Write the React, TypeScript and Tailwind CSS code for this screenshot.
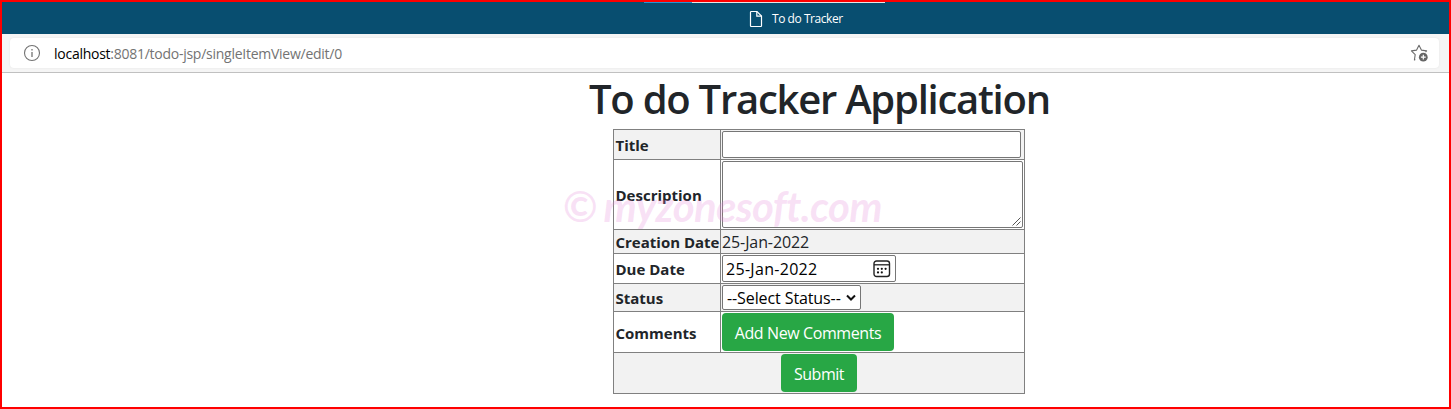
import React from 'react';

function Row({ label, shaded, height, children }: { label: string; shaded?: boolean; height: string; children: React.ReactNode }) {
  return (
    <div className={`flex border-b border-[#808080] ${height} ${shaded ? 'bg-[#f2f2f2]' : ''}`}>
      <div className="flex w-[107px] shrink-0 items-center border-r border-[#808080] pl-[1.5px] pt-[2px] text-[15px] font-bold whitespace-nowrap">
        {label}
      </div>
      <div className="flex flex-1 items-start p-px">{children}</div>
    </div>
  );
}

function PageIcon() {
  return (
    <svg width="14" height="18" viewBox="0 0 14 18" fill="none" stroke="#fff" strokeWidth="1.2">
      <path d="M1.5 2.2Q1.5 1.5 2.2 1.5H8L12.5 6V15.8Q12.5 16.5 11.8 16.5H2.2Q1.5 16.5 1.5 15.8Z" />
      <path d="M7.8 1.5V6.2H12.5" />
    </svg>
  );
}

function InfoIcon() {
  return (
    <svg width="18" height="18" viewBox="0 0 18 18" fill="none" stroke="#737373">
      <circle cx="9" cy="9" r="7.5" strokeWidth="1.1" />
      <path d="M9 8V13M9 5V6.4" strokeWidth="1.3" />
    </svg>
  );
}

function StarIcon() {
  return (
    <svg width="18" height="18" viewBox="0 0 18 18">
      <path d="M5.3 15.5L4.4 16L5.2 10.6L1.4 6.9L6.6 6.1L9 1.3L11.4 6.1L16.6 6.9L15.5 8" fill="none" stroke="#6b6b6b" strokeWidth="1.1" strokeLinejoin="round" />
      <circle cx="13.3" cy="13.2" r="4.4" fill="#666" />
      <path d="M13.3 10.8V15.6M10.9 13.2H15.7" stroke="#fff" strokeWidth="1.2" />
    </svg>
  );
}

function CalendarIcon() {
  return (
    <svg width="18" height="18" viewBox="0 0 18 18">
      <rect x="1" y="1" width="15.5" height="15.5" rx="2.5" fill="none" stroke="#222" strokeWidth="1.4" />
      <path d="M1 4.8H16.5" stroke="#222" strokeWidth="1.3" />
      <g fill="#111">
        <circle cx="5" cy="8.8" r="1.1" /><circle cx="8.8" cy="8.8" r="1.1" /><circle cx="12.6" cy="8.8" r="1.1" />
        <circle cx="5" cy="12.4" r="1.1" /><circle cx="8.8" cy="12.4" r="1.1" />
      </g>
    </svg>
  );
}

export default function App() {
  return (
    <div className="relative flex h-[409px] w-[1451px] flex-col overflow-hidden border-2 border-[#ff0000] bg-white font-['Open_Sans','Noto_Sans',sans-serif] text-[#212529]">
      <div className="flex h-8 shrink-0 flex-col bg-[#084e70]">
        <div className="ml-[642px] flex h-px">
          <div className="w-12 bg-[#2b94d1]" />
          <div className="w-[193px] bg-[#e6e6e6]" />
        </div>
        <div className="flex h-[31px] items-center pl-[747px] text-white">
          <PageIcon />
          <span className="ml-[9px] text-[12px] tracking-[-0.45px]">To do Tracker</span>
        </div>
      </div>
      <div className="h-[39px] shrink-0 border-b border-[#c0c0c0] bg-[#f5f5f5] pt-1 pr-2.5 pl-2">
        <div className="flex h-[30px] items-center rounded-[4px] bg-white pr-[11px] pl-[13px] shadow-[0_0_2px_#e2e2e2]">
          <InfoIcon />
          <span className="ml-[13px] text-[14px] tracking-[-0.26px] text-[#737373]"><span className="text-black">localhost</span>:8081/todo-jsp/singleItemView/edit/0</span>
          <span className="ml-auto"><StarIcon /></span>
        </div>
      </div>
      <h1 className="ml-[587px] h-14 shrink-0 pt-[2px] text-[40px] leading-[48px] font-[550] tracking-[-1.25px] whitespace-nowrap">To do Tracker Application</h1>
      <div className="ml-[611px] w-[412px] border-x border-t border-[#808080]">
        <Row label="Title" shaded height="h-[30px]">
          <input aria-label="Title" className="h-[27px] w-[299px] rounded-[2px] border border-[#767676] bg-white" />
        </Row>
        <Row label="Description" height="h-[70px]">
          <div className="flex h-[67px] w-[301px] items-end justify-end rounded-[2px] border border-[#767676] bg-white p-px">
            <svg width="9" height="9" viewBox="0 0 9 9" stroke="#555" strokeWidth="1"><path d="M.5 8.5L8.5 .5M4.5 8.5L8.5 4.5" /></svg>
          </div>
        </Row>
        <Row label="Creation Date" shaded height="h-[24px]">
          <span className="text-[16px] leading-[22px] tracking-[-0.1px]">25-Jan-2022</span>
        </Row>
        <Row label="Due Date" height="h-[30px]">
          <div className="flex h-[27px] w-[174px] items-center justify-between rounded-[2px] border border-[#767676] bg-white pr-[4px] pl-[3px] text-[16px] tracking-[0.3px] text-black">
            <span>25-Jan-2022</span>
            <CalendarIcon />
          </div>
        </Row>
        <Row label="Status" shaded height="h-[28px]">
          <div className="flex h-[25px] w-[139px] items-center justify-between rounded-[2px] border border-[#767676] bg-white pr-[4px] pl-[4px] text-[16px] tracking-[-0.1px] text-black">
            <span className="pt-px whitespace-nowrap">--Select Status--</span>
            <svg width="10" height="8" viewBox="0 0 10 8" fill="none" stroke="#111" strokeWidth="2"><path d="M1 1.5L5 5.5L9 1.5" /></svg>
          </div>
        </Row>
        <Row label="Comments" height="h-[41px]">
          <button className="h-[38px] w-[172px] rounded-[4px] bg-[#28a745] pt-px text-[16px] tracking-[-0.4px] whitespace-nowrap text-white">Add New Comments</button>
        </Row>
        <div className="flex h-[41px] justify-center border-b border-[#808080] bg-[#f2f2f2] pt-px">
          <button className="h-[38px] w-[76px] rounded-[4px] bg-[#28a745] pt-px text-[16px] tracking-[-0.45px] text-white">Submit</button>
        </div>
      </div>
      <div className="pointer-events-none absolute top-[178px] left-[561px] flex items-center font-['Lato',cursive] text-[#e487d7]/25 italic">
        <span className="text-[42px] leading-[52px] font-bold not-italic">©</span>
        <span className="ml-[6px] text-[42px] leading-[52px] font-bold tracking-[-0.7px] whitespace-nowrap">myzonesoft.com</span>
      </div>
    </div>
  );
}
